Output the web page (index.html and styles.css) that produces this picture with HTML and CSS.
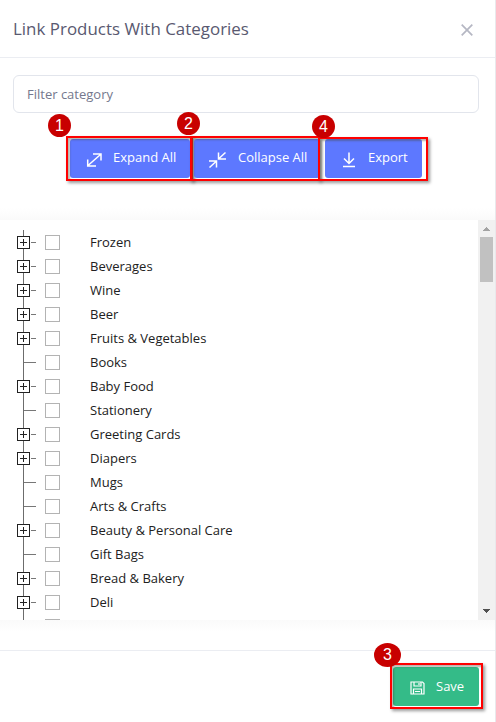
FILE: index.html
```html
<!DOCTYPE html>
<html lang="en">
<head>
<meta charset="utf-8">
<title>Link Products With Categories</title>
<link rel="stylesheet" href="styles.css">
</head>
<body>
<div class="modal">
  <header class="head">
    <h1>Link Products With Categories</h1>
    <svg class="close" width="12" height="12" viewBox="0 0 12 12"><path d="M0.7 0.7L11.3 11.3M11.3 0.7L0.7 11.3"/></svg>
  </header>
  <div class="top">
    <input class="filter" type="text" placeholder="Filter category">
    <div class="actions">
      <div class="action expand">
        <button class="btn"><svg width="16" height="16" viewBox="0 0 16 16"><path d="M2 13.500L14.500 2.500M7 2h8v6.500M1.700 7.500V14H10"/></svg><span>Expand All</span></button>
        <i class="mark"></i><b class="badge">1</b>
      </div>
      <div class="action collapse">
        <button class="btn"><svg width="19" height="18" viewBox="0 0 19 18"><path d="M17.500 1.500L11 7.500M10.500 1.500V8H18M1.500 16.500L8 10.500M1 10h7.500v6.500"/></svg><span>Collapse All</span></button>
        <i class="mark"></i><b class="badge">2</b>
      </div>
      <div class="action export">
        <button class="btn"><svg width="14" height="16" viewBox="0 0 14 16"><path d="M7 0.500v11M2 6.500l5 5 5-5M1 14.500h12"/></svg><span>Export</span></button>
        <i class="mark"></i><b class="badge">4</b>
      </div>
    </div>
  </div>
  <div class="panel">
    <ul class="tree">
      <li class="parent"><i class="node"></i><i class="check"></i><span>Frozen</span></li>
      <li class="parent"><i class="node"></i><i class="check"></i><span>Beverages</span></li>
      <li class="parent"><i class="node"></i><i class="check"></i><span>Wine</span></li>
      <li class="parent"><i class="node"></i><i class="check"></i><span>Beer</span></li>
      <li class="parent"><i class="node"></i><i class="check"></i><span>Fruits &amp; Vegetables</span></li>
      <li><i class="node"></i><i class="check"></i><span>Books</span></li>
      <li class="parent"><i class="node"></i><i class="check"></i><span>Baby Food</span></li>
      <li><i class="node"></i><i class="check"></i><span>Stationery</span></li>
      <li class="parent"><i class="node"></i><i class="check"></i><span>Greeting Cards</span></li>
      <li class="parent"><i class="node"></i><i class="check"></i><span>Diapers</span></li>
      <li><i class="node"></i><i class="check"></i><span>Mugs</span></li>
      <li><i class="node"></i><i class="check"></i><span>Arts &amp; Crafts</span></li>
      <li class="parent"><i class="node"></i><i class="check"></i><span>Beauty &amp; Personal Care</span></li>
      <li><i class="node"></i><i class="check"></i><span>Gift Bags</span></li>
      <li class="parent"><i class="node"></i><i class="check"></i><span>Bread &amp; Bakery</span></li>
      <li class="parent"><i class="node"></i><i class="check"></i><span>Deli</span></li>
      <li><i class="node"></i><i class="check"></i></li>
    </ul>
    <div class="bar">
      <svg width="7" height="4" viewBox="0 0 7 4" fill="#a3a3a3" shape-rendering="crispEdges"><path d="M3 0h1v1h1v1h1v1h1v1H0V3h1V2h1V1h1z"/></svg>
      <i class="thumb"></i>
      <svg width="7" height="4" viewBox="0 0 7 4" fill="#505050" shape-rendering="crispEdges"><path d="M0 0h7v1H6v1H5v1H4v1H3V3H2V2H1V1H0z"/></svg>
    </div>
  </div>
  <div class="gap"></div>
  <footer class="foot">
    <div class="action save">
      <button class="btn"><svg width="15" height="14" viewBox="0 0 15 14"><path d="M1 1h11.500l1.500 1.500V13H1zM4 1v4h7V1M9 2v2M3.500 13V8h8v5M5 10.500h5"/></svg><span>Save</span></button>
      <i class="mark"></i><b class="badge">3</b>
    </div>
  </footer>
</div>
</body>
</html>
```
FILE: styles.css
```css
*, *::before { box-sizing: border-box; }
body { margin: 0; background: #fff; font: 13px/24px "Open Sans", sans-serif; overflow: hidden; }
.modal { width: 496px; height: 722px; border-right: 1px solid #e9e9ec; display: flex; flex-direction: column; }
.head { height: 58px; flex: none; padding: 0 22px 0 13px; border-bottom: 1px solid #ebedf2; display: flex; align-items: center; justify-content: space-between; }
h1 { margin: 0; font-size: 16.9px; font-weight: 400; color: #595970; letter-spacing: 0.02px; }
.close { fill: none; stroke: #b5b7c3; stroke-width: 1.7; margin-top: 3px; }
.top { height: 162px; flex: none; padding: 17px 16px 0 13px; background: linear-gradient(#fff 150px, #fafafa); }
.filter { display: block; width: 100%; height: 38px; padding: 0 13px; border: 1px solid #e2e5ec; border-radius: 6px; background: #fff; font: 13px "Open Sans", sans-serif; }
.filter::placeholder { color: #74788d; opacity: 1; }
.actions { display: flex; gap: 4px; padding: 26px 0 0 57px; }
.action { position: relative; height: 39px; }
.expand { width: 120px; }
.collapse { width: 126px; }
.export { width: 97px; margin-left: 1px; }
.btn { width: 100%; height: 39px; margin: 0; padding: 0; border: 0; border-radius: 3px; background: #5d78ff; color: #fff; font: 13px "Open Sans", sans-serif; display: flex; align-items: center; }
.btn svg { flex: none; fill: none; stroke: #fff; stroke-width: 1.5; margin: 3px 0 0 16px; }
.btn span { margin: -3px 0 0 11px; white-space: nowrap; }
.collapse .btn svg { margin-left: 14px; }
.collapse .btn span { margin-left: 11px; }
.export .btn svg { margin-left: 17px; }
.export .btn span { margin-left: 12px; }
.mark { position: absolute; border: 2px solid #f00; box-shadow: 2px 2px 3px rgba(0,0,0,.4), inset 2px 2px 2px rgba(70,70,50,.4); }
.badge { position: absolute; width: 23px; height: 23px; border-radius: 50%; background: #c80000; color: #fff; font: 16px/24px "Liberation Sans", sans-serif; text-align: center; z-index: 2; }
.expand .mark { left: -4px; top: -3px; width: 127px; height: 45px; }
.collapse .mark { left: -4px; top: -3px; width: 130px; height: 45px; }
.export .mark { left: -7px; top: -2px; width: 110px; height: 44px; }
.expand .badge { left: -22px; top: -25px; }
.collapse .badge { left: -17px; top: -27px; }
.export .badge { left: -13px; top: -24px; }
.panel { height: 400px; flex: none; display: flex; overflow: hidden; }
.tree { list-style: none; margin: 0; padding: 10px 0 0 17px; flex: 1; }
.tree li { height: 24px; display: flex; align-items: flex-start; color: #212121; }
.node { flex: none; width: 19px; height: 24px; background: linear-gradient(#6c6c6c,#6c6c6c) 6px 0 / 1px 24px no-repeat, linear-gradient(#777,#777) 7px 12px / 12px 1px no-repeat; }
.parent .node::before { content: ""; display: block; width: 13px; height: 13px; margin-top: 6px; border: 1px solid #222; background: linear-gradient(#222,#222) center / 7px 1px no-repeat, linear-gradient(#222,#222) center / 1px 7px no-repeat, #fff; }
.parent .node { background: linear-gradient(#6c6c6c,#6c6c6c) 6px 0 / 1px 24px no-repeat, linear-gradient(#777,#777) 14px 12px / 5px 1px no-repeat; }
.check { flex: none; width: 15px; height: 15px; margin: 5px 30px 0 9px; border: 1px solid #b3b3b3; }
.bar { width: 17px; background: #f1f1f1; display: flex; flex-direction: column; align-items: center; padding: 7px 0; }
.thumb { width: 13px; height: 45px; margin: 6px 0 auto; background: #c1c1c1; }
.gap { height: 30px; flex: none; background: linear-gradient(#fafafa, #fff 12px); }
.foot { flex: 1; border-top: 1px solid #ebedf2; display: flex; justify-content: flex-end; padding: 16px 16px 0 0; }
.save { width: 86px; }
.save .btn { background: #34bb88; }
.save .btn svg { stroke-width: 1.2; margin-left: 17px; }
.save .btn span { margin-top: -2px; }
.save .mark { left: -3px; top: -4px; width: 93px; height: 46px; }
.save .badge { left: -19px; top: -24px; width: 27px; height: 24px; }
```
